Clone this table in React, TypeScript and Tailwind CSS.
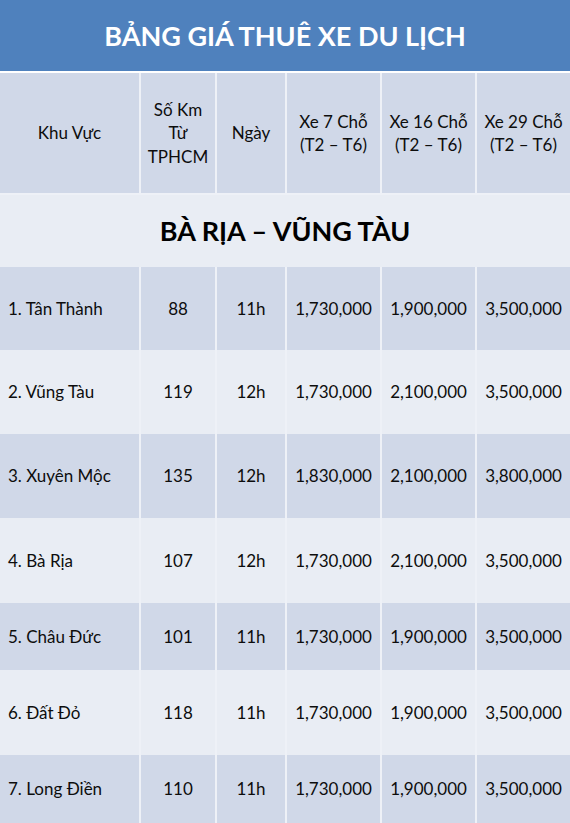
type Row = {
  name: string;
  km: string;
  day: string;
  p7: string;
  p16: string;
  p29: string;
  h: string;
};

const ROWS: Row[] = [
  { name: "1. Tân Thành", km: "88", day: "11h", p7: "1,730,000", p16: "1,900,000", p29: "3,500,000", h: "h-[83px]" },
  { name: "2. Vũng Tàu", km: "119", day: "12h", p7: "1,730,000", p16: "2,100,000", p29: "3,500,000", h: "h-[84px]" },
  { name: "3. Xuyên Mộc", km: "135", day: "12h", p7: "1,830,000", p16: "2,100,000", p29: "3,800,000", h: "h-[84px]" },
  { name: "4. Bà Rịa", km: "107", day: "12h", p7: "1,730,000", p16: "2,100,000", p29: "3,500,000", h: "h-[85px]" },
  { name: "5. Châu Đức", km: "101", day: "11h", p7: "1,730,000", p16: "1,900,000", p29: "3,500,000", h: "h-[67px]" },
  { name: "6. Đất Đỏ", km: "118", day: "11h", p7: "1,730,000", p16: "1,900,000", p29: "3,500,000", h: "h-[85px]" },
  { name: "7. Long Điền", km: "110", day: "11h", p7: "1,730,000", p16: "1,900,000", p29: "3,500,000", h: "h-[68px]" },
];

const COLS = "grid grid-cols-[139px_76px_70px_95px_95px_95px]";

function Cell({ children, first, left }: { children: React.ReactNode; first?: boolean; left?: boolean }) {
  return (
    <div
      className={`flex items-center whitespace-nowrap ${left ? "justify-start pl-2" : "justify-center text-center"} ${
        first ? "" : "border-l-2 border-[#eef1f7]"
      }`}>
      {children}
    </div>
  );
}

export default function App() {
  return (
    <div className="w-[570px] h-[823px] overflow-hidden bg-white font-['Lato',sans-serif] text-[17px] text-[#0d0d0d]">
      {/* Title */}
      <div className="flex h-[71px] items-center justify-center bg-[#4f81bd] pt-[2px]">
        <h1 className="text-[27px] font-bold text-white">BẢNG GIÁ THUÊ XE DU LỊCH</h1>
      </div>
      <div className="h-[2px] bg-white" />

      {/* Header */}
      <div className={`${COLS} h-[120px] bg-[#d0d8e8] leading-[23.5px]`}>
        <Cell first>Khu Vực</Cell>
        <Cell>
          Số Km
          <br />
          Từ
          <br />
          TPHCM
        </Cell>
        <Cell>Ngày</Cell>
        <Cell>
          Xe 7 Chỗ
          <br />
          (T2 – T6)
        </Cell>
        <Cell>
          Xe 16 Chỗ
          <br />
          (T2 – T6)
        </Cell>
        <Cell>
          Xe 29 Chỗ
          <br />
          (T2 – T6)
        </Cell>
      </div>

      {/* Section */}
      <div className="flex h-[74px] items-center justify-center border-t-2 border-[#eef1f7] bg-[#e9edf4]">
        <h2 className="text-[27px] font-bold text-black">BÀ RỊA – VŨNG TÀU</h2>
      </div>

      {/* Rows */}
      {ROWS.map((r, i) => (
        <div key={r.name} className={`${COLS} ${r.h} ${i % 2 === 0 ? "bg-[#d0d8e8]" : "bg-[#e9edf4]"}`}>
          <Cell first left>
            {r.name}
          </Cell>
          <Cell>{r.km}</Cell>
          <Cell>{r.day}</Cell>
          <Cell>{r.p7}</Cell>
          <Cell>{r.p16}</Cell>
          <Cell>{r.p29}</Cell>
        </div>
      ))}
    </div>
  );
}
